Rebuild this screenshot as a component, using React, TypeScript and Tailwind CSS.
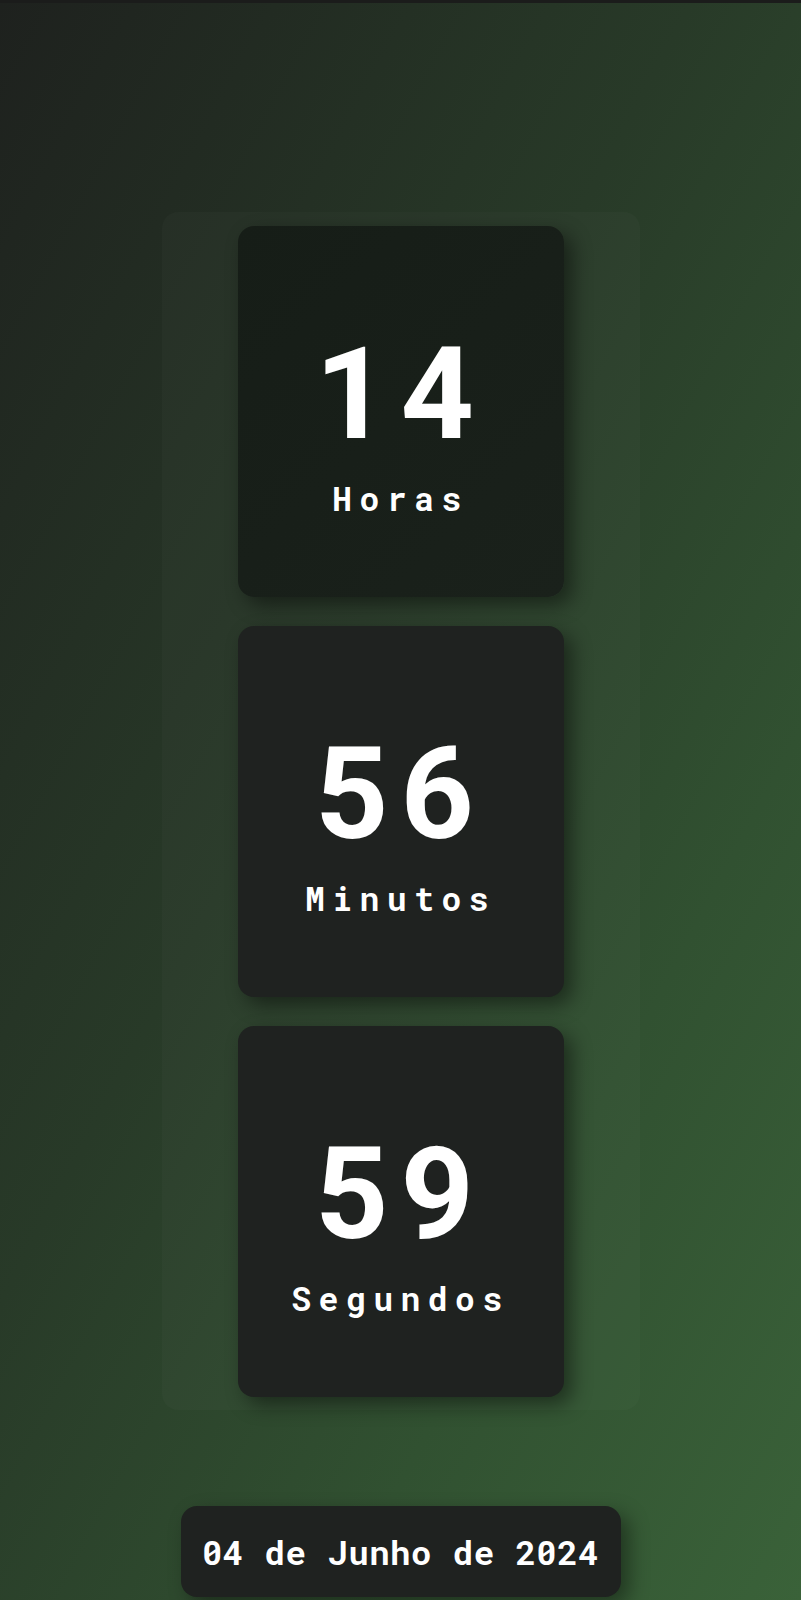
import React from "react";

const items = [
  { value: "14", label: "Horas", bg: "bg-[linear-gradient(135deg,#161d17,#1a211b)]" },
  { value: "56", label: "Minutos", bg: "bg-[#1f2220]" },
  { value: "59", label: "Segundos", bg: "bg-[#1f2220]" },
];

function Card({ value, label, bg }: { value: string; label: string; bg: string }) {
  return (
    <div
      className={`w-[326px] h-[371px] rounded-2xl ${bg} shadow-[8px_8px_20px_rgba(0,0,0,0.45)] flex flex-col items-center pt-[104px]`}
    >
      <div
        className="text-white text-[128px] leading-[128px] font-bold tracking-[12px]"
        style={{ fontFamily: "Roboto, 'Noto Sans', sans-serif" }}
      >
        {value}
      </div>
      <div
        className="mt-[20px] text-white text-[33px] leading-[40px] font-bold tracking-[7.5px]"
        style={{ fontFamily: "'Roboto Mono', 'DejaVu Sans Mono', 'Liberation Mono', monospace" }}
      >
        {label}
      </div>
    </div>
  );
}

export default function App() {
  return (
    <div className="relative w-full h-[1600px] overflow-hidden bg-[linear-gradient(118deg,#1e211e_0%,#283a28_42%,#315131_72%,#3a6239_100%)]">
      <div className="h-[3px] bg-[#1b1c1b]" />
      <div className="flex flex-col items-center">
        <div className="mt-[209px] w-[478px] rounded-2xl bg-[rgba(255,255,255,0.02)] flex flex-col items-center gap-[29px] pt-[14px] pb-[13px]">
          {items.map((it) => (
            <Card key={it.label} {...it} />
          ))}
        </div>
        <div
          className="mt-[96px] w-[440px] rounded-2xl bg-[#1f2220] shadow-[8px_8px_20px_rgba(0,0,0,0.4)] py-5 text-center text-white text-[34px] leading-[51px] font-bold tracking-[0.5px]"
          style={{ fontFamily: "'Roboto Mono', 'DejaVu Sans Mono', 'Liberation Mono', monospace" }}
        >
          04 de Junho de 2024
        </div>
      </div>
    </div>
  );
}
